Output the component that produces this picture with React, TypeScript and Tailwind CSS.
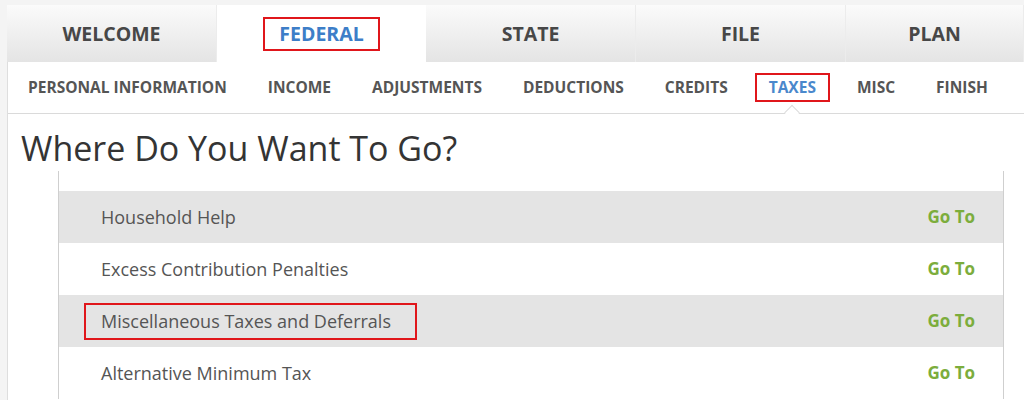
const tabs = ["WELCOME", "FEDERAL", "STATE", "FILE", "PLAN"];
const steps = [
  "PERSONAL INFORMATION",
  "INCOME",
  "ADJUSTMENTS",
  "DEDUCTIONS",
  "CREDITS",
  "TAXES",
  "MISC",
  "FINISH",
];
const topics = [
  { label: "Self-Employment Tax", shaded: false, clipped: true },
  { label: "Household Help", shaded: true },
  { label: "Excess Contribution Penalties", shaded: false },
  { label: "Miscellaneous Taxes and Deferrals", shaded: true, marked: true },
  { label: "Alternative Minimum Tax", shaded: false },
];

export default function App() {
  return (
    <div className="h-[400px] w-[1024px] overflow-hidden bg-[#f4f4f4] pl-[7px] pt-[5px] font-['Open_Sans',sans-serif]">
      {/* main tabs */}
      <div className="flex h-[57px]">
        {tabs.map((tab) => {
          const active = tab === "FEDERAL";
          return (
            <div
              key={tab}
              className={
                active
                  ? "flex w-[209px] items-center justify-center bg-white"
                  : "flex w-[210px] shrink-0 items-center justify-center border-r border-[#ececec] bg-gradient-to-b from-[#fbfbfb] to-[#e4e4e4] last:w-auto last:flex-1"
              }
            >
              {active ? (
                <span className="border-2 border-[#e0161b] px-[14px] py-[2px] text-[19.5px] font-bold leading-[26px] text-[#3d7ec8]">
                  {tab}
                </span>
              ) : (
                <span className="text-[19.5px] font-bold text-[#474747]">{tab}</span>
              )}
            </div>
          );
        })}
      </div>

      <div className="h-full border-l border-[#dedede] bg-white">
        {/* sub steps */}
        <div className="relative flex h-[52px] items-center gap-[41px] border-b border-[#dadada] pl-[20px]">
          {steps.map((step) =>
            step === "TAXES" ? (
              <span
                key={step}
                className="relative -mx-[14px] border-2 border-[#e0161b] px-[12px] py-[2px] text-[15.5px] font-bold leading-[21px] text-[#4a88cc]"
              >
                {step}
                <span className="absolute left-1/2 top-[32px] h-[11px] w-[11px] -translate-x-1/2 rotate-45 border-l border-t border-[#dadada] bg-white" />
              </span>
            ) : (
              <span key={step} className="text-[15.5px] font-bold text-[#555555]">
                {step}
              </span>
            )
          )}
        </div>

        <h1 className="pl-[13px] pt-[12px] text-[34px] leading-[45px] text-[#343434]">
          Where Do You Want To Go?
        </h1>

        {/* topic list, scrolled so the first row is cut off */}
        <div className="ml-[50px] w-[946px] overflow-hidden border-x border-[#cfcfcf]">
          <div className="-mt-[32px]">
            {topics.map((t) => (
              <div
                key={t.label}
                className={`flex h-[52px] items-center justify-between pl-[42px] pr-[28px] ${
                  t.shaded ? "bg-[#e4e4e4]" : "bg-white"
                } ${t.clipped ? "-translate-y-[6px]" : ""}`}
              >
                <span
                  className={`text-[18px] text-[#555555] ${
                    t.marked ? "-ml-[17px] border-2 border-[#e0161b] py-[3px] pl-[15px] pr-[24px]" : ""
                  }`}
                >
                  {t.label}
                </span>
                <span className="text-[17px] font-bold text-[#7cad3c]">Go To</span>
              </div>
            ))}
          </div>
        </div>
      </div>
    </div>
  );
}
